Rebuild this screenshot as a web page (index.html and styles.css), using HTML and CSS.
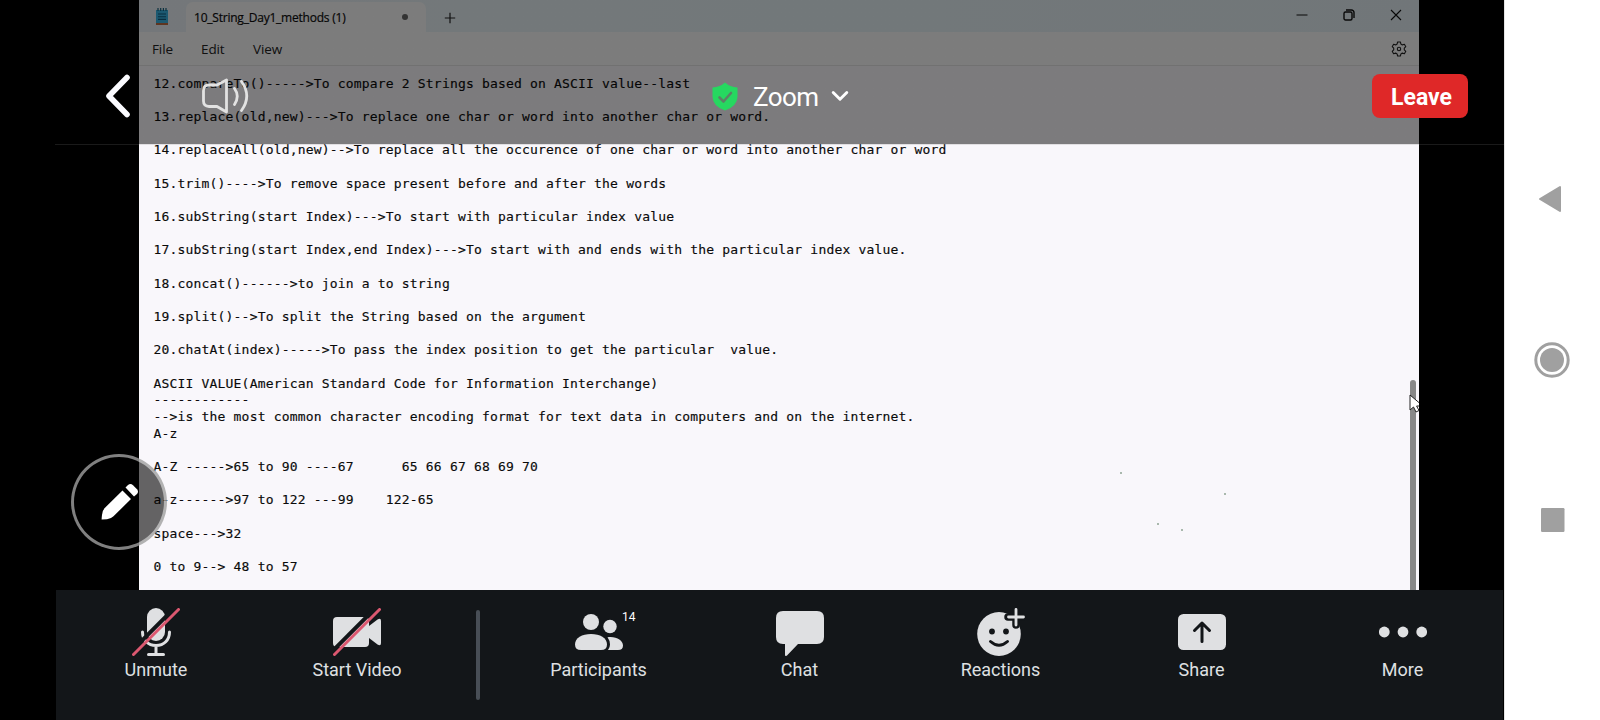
FILE: index.html
```html
<!DOCTYPE html>
<html lang="en">
<head>
<meta charset="utf-8">
<title>Zoom</title>
<link rel="stylesheet" href="styles.css">
</head>
<body>
<div class="screen">
  <main class="meeting">
    <section class="notepad">
      <div class="titlebar">
        <svg class="app-icon" width="14" height="18" viewBox="0 0 14 18"><path d="M1 2h12v13H1z" fill="#38b3e2"/><path d="M1 15h12v2H1z" fill="#bd6a40"/><path d="M3 0v3M5.700 0v3M8.400 0v3M11 0v3" stroke="#17617f" stroke-width="1.200"/><path d="M3 6h8M3 8.700h8M3 11.400h8" stroke="#115d80" stroke-width="1.100"/></svg>
        <div class="tab"><span class="tab-name">10_String_Day1_methods (1)</span><i class="unsaved"></i></div>
        <svg class="new-tab" width="12" height="12" viewBox="0 0 12 12"><path d="M6 .8v10.400M.8 6h10.400" stroke="#222" stroke-width="1.200"/></svg>
        <div class="controls">
          <svg width="12" height="12" viewBox="0 0 12 12"><path d="M.5 6h11" stroke="#111" stroke-width="1"/></svg>
          <svg width="12" height="12" viewBox="0 0 12 12"><rect x="1" y="3" width="8" height="8" rx="1.500" fill="none" stroke="#111" stroke-width="1.400"/><path d="M3 1h5.500a2.500 2.500 0 0 1 2.500 2.500V9" fill="none" stroke="#111" stroke-width="1.400"/></svg>
          <svg width="12" height="12" viewBox="0 0 12 12"><path d="M1 1l10 10M11 1L1 11" stroke="#111" stroke-width="1.100"/></svg>
        </div>
      </div>
      <div class="menubar">
        <span class="m-file">File</span><span class="m-edit">Edit</span><span>View</span>
        <svg class="gear" width="16" height="16" viewBox="0 0 16 16"><path d="M6.600 1h2.800l.5 2.100 1.400.8 2.100-.6 1.400 2.400-1.500 1.500v1.600l1.500 1.500-1.400 2.400-2.100-.6-1.400.8-.5 2.100H6.600l-.5-2.100-1.400-.8-2.100.6-1.400-2.400 1.500-1.500V7.200L1.200 5.700l1.400-2.400 2.100.6 1.400-.8z" fill="none" stroke="#222" stroke-width="1.100" stroke-linejoin="round"/><circle cx="8" cy="8" r="1.700" fill="none" stroke="#222" stroke-width="1.100"/></svg>
      </div>
      <div class="editor">
<pre class="text">12.compareTo()-----&gt;To compare 2 Strings based on ASCII value--last

13.replace(old,new)---&gt;To replace one char or word into another char or word.

14.replaceAll(old,new)--&gt;To replace all the occurence of one char or word into another char or word

15.trim()----&gt;To remove space present before and after the words

16.subString(start Index)---&gt;To start with particular index value

17.subString(start Index,end Index)---&gt;To start with and ends with the particular index value.

18.concat()------&gt;to join a to string

19.split()--&gt;To split the String based on the argument

20.chatAt(index)-----&gt;To pass the index position to get the particular  value.

ASCII VALUE(American Standard Code for Information Interchange)
------------
--&gt;is the most common character encoding format for text data in computers and on the internet.
A-z

A-Z -----&gt;65 to 90 ----67      65 66 67 68 69 70

a-z------&gt;97 to 122 ---99    122-65

space---&gt;32

0 to 9--&gt; 48 to 57</pre>
        <svg class="specks" width="110" height="62" viewBox="0 0 110 62" fill="#a9b8ad"><path d="M1 1h2v2H1zM105 22h2v2h-2zM38 52h2v2h-2zM62 58h2v2h-2z"/></svg>
        <i class="scroll-thumb"></i>
        <svg class="cursor" width="10" height="20" viewBox="0 0 10 20"><path d="M1 1v15l3.500-3 2.500 5 3-1.500-2.400-4.500H14z" fill="#fff" stroke="#222" stroke-width="1"/></svg>
      </div>
    </section>

    <header class="topbar">
      <svg class="back" width="26" height="44" viewBox="0 0 26 44"><path d="M22 3.500L4 22l18 18.500" fill="none" stroke="#fbfbff" stroke-width="5.600" stroke-linecap="round" stroke-linejoin="round"/></svg>
      <svg class="speaker" width="48" height="38" viewBox="0 0 48 38" fill="none" stroke="#e2e2e2" stroke-width="2.800" stroke-linecap="round" stroke-linejoin="round"><path d="M25.500 3v32L16 29.500H8Q2.500 29.500 2.500 24V13.500Q2.500 8 8 8h8z"/><path d="M33.500 11.500Q39 19 33.500 27.500M40.500 4.500Q51 19 40.500 33.500"/></svg>
      <div class="meeting-title">
        <svg width="26" height="29" viewBox="0 0 26 29"><path d="M13 .5Q18 5 25.500 5.500V15Q25 24.500 13 28.500 1 24.500.5 15V5.500Q8 5 13 .5z" fill="#26d860"/><path d="M7.500 15.500l4 4L19 11" fill="none" stroke="#5c8066" stroke-width="2.600" stroke-linecap="round" stroke-linejoin="round"/></svg>
        <span class="name">Zoom</span>
        <svg class="caret" width="18" height="12" viewBox="0 0 18 12"><path d="M2.200 2.500L9 9.300l6.800-6.800" fill="none" stroke="#fff" stroke-width="2.900" stroke-linecap="round" stroke-linejoin="round"/></svg>
      </div>
      <button class="leave">Leave</button>
    </header>

    <button class="annotate" aria-label="Annotate">
      <svg width="40" height="40" viewBox="0 0 40 40" fill="#fff"><path d="M2 37.600Q1.300 38.300 2 33 2.200 28.500 5 25.700L22.500 8.500 31 17 13.500 34.300Q11 36.800 7 37.300z"/><path d="M25.500 5.500L28 3Q30.500 1 33 3.200L37 7.300Q39 9.700 37 12L34 14.500z"/></svg>
    </button>

    <nav class="toolbar">
      <div class="tool"><svg viewBox="0 0 48 48"><rect x="15" y="0" width="18" height="33" rx="9" fill="#dfe0e2"/><path d="M10.500 24c0 8 5.500 13.500 13.500 13.500S37.500 32 37.500 24M24 38v8M16.500 46.500h15" fill="none" stroke="#dfe0e2" stroke-width="3" stroke-linecap="round"/><path d="M-1 43.500L44-1.500" stroke="#131619" stroke-width="4"/><path d="M1.500 46.500l45-45" stroke="#dc5870" stroke-width="3" stroke-linecap="round"/></svg><span>Unmute</span></div>
      <div class="tool"><svg viewBox="0 0 48 48"><rect x="0" y="9" width="36" height="30" rx="4" fill="#dfe0e2"/><path d="M36 18l8.500-6.500Q48 9.500 48 13v22q0 3.500-3.500 1.500L36 30z" fill="#dfe0e2"/><path d="M-1 43.500L44-1.500" stroke="#131619" stroke-width="4"/><path d="M1.500 46.500l45-45" stroke="#dc5870" stroke-width="3" stroke-linecap="round"/></svg><span>Start Video</span></div>
      <i class="divider"></i>
      <div class="tool"><svg viewBox="0 0 48 48" fill="#dfe0e2"><circle cx="16" cy="14" r="8"/><circle cx="35" cy="18.500" r="6.700"/><path d="M6 42Q0 42 0 36.500C0 30 7 26 16 26s16 4 16 10.500Q32 42 26 42z"/><path d="M32.500 29.200C41 28 48 32 48 37.500Q48 42 43 42H33Q35 39.500 35 36.500 35 32.500 32.500 29.200z"/></svg><span>Participants</span><b class="count">14</b></div>
      <div class="tool"><svg viewBox="0 0 48 48" fill="#dfe0e2"><path d="M7 3h34q7 0 7 7v19q0 7-7 7H22L11 47.500Q9 49 9 46.500V36H7q-7 0-7-7V10q0-7 7-7z"/></svg><span>Chat</span></div>
      <div class="tool"><svg viewBox="0 0 48 48"><ellipse cx="22" cy="26" rx="21.800" ry="22" fill="#dfe0e2"/><circle cx="15" cy="23.500" r="2.900" fill="#131619"/><circle cx="29" cy="23.500" r="2.900" fill="#131619"/><path d="M13.500 33.500Q22 41 30.500 33.500" fill="none" stroke="#131619" stroke-width="3" stroke-linecap="round"/><path d="M39 0v17M31 9h17" stroke="#131619" stroke-width="7.500" stroke-linecap="round"/><path d="M39 1.500v15.500M31.500 9h15" stroke="#dfe0e2" stroke-width="2.800" stroke-linecap="round"/></svg><span>Reactions</span></div>
      <div class="tool"><svg viewBox="0 0 48 48"><rect x="0" y="6" width="48" height="36" rx="5.500" fill="#dfe0e2"/><path d="M24 33.500V15M16.500 22.500L24 15l7.500 7.500" fill="none" stroke="#131619" stroke-width="3" stroke-linecap="round" stroke-linejoin="round"/></svg><span>Share</span></div>
      <div class="tool"><svg viewBox="0 0 48 48" fill="#dfe0e2"><circle cx="5.300" cy="24" r="5.400"/><circle cx="24" cy="24" r="5.400"/><circle cx="42.700" cy="24" r="5.400"/></svg><span>More</span></div>
    </nav>
  </main>

  <aside class="sysnav">
    <svg width="24" height="28" viewBox="0 0 24 28"><path d="M2 14L22 2v24z" fill="#a0a0a0" stroke="#a0a0a0" stroke-width="2" stroke-linejoin="round"/></svg>
    <svg width="36" height="36" viewBox="0 0 36 36"><circle cx="18" cy="18" r="16.200" fill="none" stroke="#a0a0a0" stroke-width="3"/><circle cx="18" cy="18" r="12" fill="#a0a0a0"/></svg>
    <svg width="24" height="24" viewBox="0 0 24 24"><rect width="23.500" height="24" rx="1.200" fill="#a0a0a0"/></svg>
  </aside>
</div>
</body>
</html>
```
FILE: styles.css
```css
* { box-sizing: border-box; }
body { margin: 0; background: #000; }
svg { display: block; overflow: hidden; flex: none; }
button { border: 0; padding: 0; margin: 0; }
.screen { display: flex; width: 1600px; height: 720px; overflow: hidden; }
.meeting { position: relative; width: 1504px; height: 720px; background: #000; flex: none; }

.notepad {
  width: 1280px; height: 590px; margin-left: 139px;
  display: flex; flex-direction: column; overflow: hidden;
  background: #f9f7fb; color: #0c0c0c;
  font-family: "Open Sans", "Noto Sans", sans-serif;
}
.titlebar {
  display: flex; align-items: center; height: 32px; flex: none;
  background: linear-gradient(90deg, #e9eff4, #e5f1f5 50%, #e3edf2);
}
.app-icon { margin: 1px 0 0 16px; }
.tab {
  display: flex; align-items: center; align-self: flex-end;
  width: 240px; height: 30px; margin-left: 17px; padding: 0 18px 0 8px;
  background: #f9f9f9; border-radius: 7px 7px 0 0;
}
.tab-name { font-size: 12px; white-space: nowrap; letter-spacing: -.22px; -webkit-text-stroke: .2px #0c0c0c; }
.unsaved { width: 6px; height: 6px; border-radius: 50%; background: #666; margin-left: auto; }
.new-tab { margin: 3px 0 0 18px; }
.controls { display: flex; gap: 35px; margin: -3px 17px 0 auto; }
.menubar {
  display: flex; align-items: center; height: 34px; flex: none;
  padding: 1px 12px 0 13px; font-size: 13.500px; letter-spacing: -.1px;
  background: #f9f9f9; border-bottom: 1px solid #e2e2e2; color: #222;
}
.menubar .m-file { width: 49px; }
.menubar .m-edit { width: 52px; }
.gear { margin-left: auto; }
.editor { position: relative; flex: 1; padding: 9.500px 0 0 14.500px; }
.text {
  margin: 0; font: 13px/16.670px "DejaVu Sans Mono", "Liberation Mono", monospace;
  letter-spacing: .184px; color: #0a0a0a; -webkit-text-stroke: .15px #0a0a0a;
}
.specks { position: absolute; left: 980px; top: 405px; }
.scroll-thumb {
  position: absolute; right: 3px; top: 314px; bottom: -6px; width: 6px;
  border-radius: 3px; background: #888;
}
.cursor { position: absolute; right: 0; top: 328px; }

.topbar {
  position: absolute; left: 0; top: 0; width: 1504px; height: 145px;
  display: flex; align-items: center; padding: 47px 36px 0 105px;
  font-family: Roboto, sans-serif; color: #fff;
  background: linear-gradient(rgba(0,0,0,.5), rgba(0,0,0,.5)) 0 0 / 100% 144px no-repeat;
}
.topbar::after {
  content: ""; position: absolute; left: 55px; right: 0; bottom: 0; height: 1px;
  background: rgba(128,128,128,.2);
}
.speaker { margin-left: 70px; }
.meeting-title { display: flex; align-items: center; margin-left: 463px; }
.name { font-size: 26px; line-height: 30px; width: 65px; margin-left: 15px; margin-top: 2px; letter-spacing: -.6px; }
.caret { margin-left: 13px; }
.leave {
  width: 96px; height: 44px; margin-left: auto; border-radius: 8px;
  background: #df2828; color: #fff; font: 700 23px/44px Roboto, sans-serif;
  padding: 2px 0 0 3px;
}
.annotate {
  position: absolute; left: 71px; top: 454px; width: 96px; height: 96px;
  display: grid; place-items: center; border-radius: 50%;
  border: 3px solid rgba(255,255,255,.5); background: rgba(0,0,0,.6);
}
.annotate svg { margin-left: 2px; }

.toolbar {
  position: absolute; left: 56px; top: 590px; width: 1447px; height: 130px;
  display: grid; grid-template-columns: 200px 202px 40px repeat(5, 201px);
  background: #131619; color: #dfe0e2; font-family: Roboto, sans-serif;
}
.tool {
  position: relative; display: flex; flex-direction: column; align-items: center;
  padding-top: 18px; font-size: 18px; line-height: 22px; white-space: nowrap;
}
.tool svg { width: 48px; height: 48px; margin-bottom: 3px; }
.count { position: absolute; left: 124px; top: 20px; font-size: 12px; line-height: 14px; font-weight: 400; color: #fff; }
.divider { width: 4px; height: 90px; margin: 20px 0 0 18px; border-radius: 2px; background: #484e56; }

.sysnav {
  flex: 1; display: flex; flex-direction: column; align-items: center;
  background: #fff; border-left: 1px solid #e4e4e4; padding: 184.500px 2px 0 0;
}
.sysnav svg:nth-child(1) { margin-right: 4px; }
.sysnav svg:nth-child(2) { margin: 129.500px 0 130px; }
.sysnav svg:nth-child(3) { margin: 0 0 0 2px; }
```
